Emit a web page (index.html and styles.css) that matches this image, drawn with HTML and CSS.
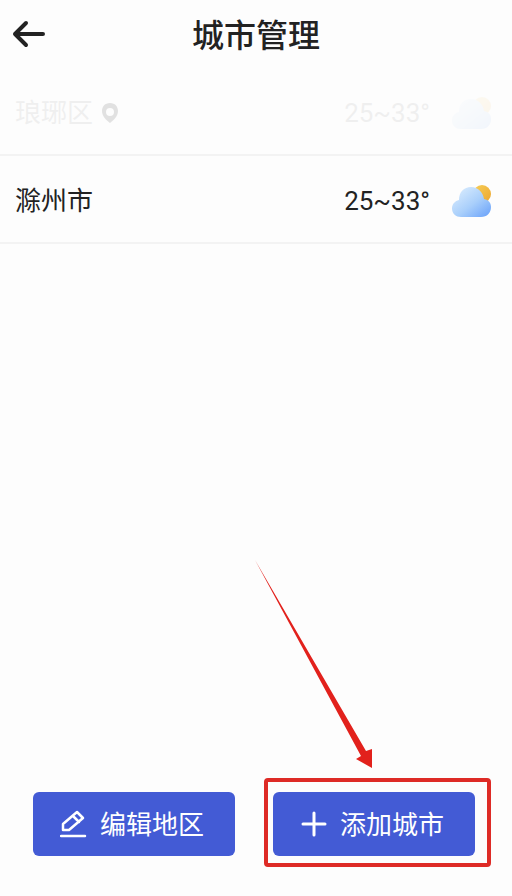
FILE: index.html
```html
<!DOCTYPE html>
<html lang="zh-CN">
<head>
    <meta charset="UTF-8">
    <meta name="viewport" content="width=device-width, initial-scale=1.0">
    <title>城市管理</title>
    <link rel="stylesheet" href="styles.css">
</head>
<body>
    <header class="top-bar">
        <button type="button" class="back-btn" aria-label="返回">
            <svg width="34" height="28" viewBox="0 0 34 28" fill="none" stroke="currentColor" stroke-width="4" stroke-linecap="round" stroke-linejoin="round">
                <path d="M14 3L3 14L14 25M3 14H31"/>
            </svg>
        </button>
        <h1>城市管理</h1>
    </header>

    <main>
        <ul class="city-list">
            <li class="city-row faded">
                <span class="city-name">琅琊区</span>
                <svg class="pin" width="18" height="20" viewBox="0 0 18 20">
                    <path fill="currentColor" fill-rule="evenodd" d="M9 0C4 0 1 3.600 1 8C1 13 5 17 9 20C13 17 17 13 17 8C17 3.600 14 0 9 0ZM9 5A4 4 0 1 1 9 13A4 4 0 1 1 9 5Z"/>
                </svg>
                <span class="temp">25~33°</span>
                <svg class="weather" width="40" height="34" viewBox="0 0 40 34">
                    <use href="#cloudy"/>
                </svg>
            </li>
            <li class="city-row">
                <span class="city-name">滁州市</span>
                <span class="temp">25~33°</span>
                <svg class="weather" width="40" height="34" viewBox="0 0 40 34">
                    <defs>
                        <linearGradient id="cloud" x1="0.1" y1="0.2" x2="0.9" y2="1">
                            <stop offset="0" stop-color="#d3e8fd"/>
                            <stop offset="0.5" stop-color="#a9cffb"/>
                            <stop offset="1" stop-color="#6ea5fa"/>
                        </linearGradient>
                        <linearGradient id="sun" x1="0" y1="0" x2="1" y2="1">
                            <stop offset="0" stop-color="#f6cf58"/>
                            <stop offset="1" stop-color="#eda52f"/>
                        </linearGradient>
                    </defs>
                    <g id="cloudy">
                        <circle cx="30" cy="10" r="9" fill="url(#sun)"/>
                        <path fill="url(#cloud)" d="M9 33C4 33 0 29.500 0 24.500C0 20 3 17 7 16C7 8 12 3 19 3C26 3 31 8 32 15C37 16 39 19 39 23C39 29 35 33 29 33Z"/>
                    </g>
                </svg>
            </li>
        </ul>
    </main>

    <footer class="actions">
        <button type="button" class="action-btn">
            <svg width="28" height="28" viewBox="0 0 28 28" fill="none" stroke="currentColor" stroke-width="2.500" stroke-linejoin="round" stroke-linecap="round">
                <path d="M3 20V14L17 2L23 8L9 20ZM13 6L19 12"/>
                <path d="M1 26H25"/>
            </svg>
            <span>编辑地区</span>
        </button>
        <div class="highlight">
            <button type="button" class="action-btn">
                <svg width="28" height="28" viewBox="0 0 28 28" fill="none" stroke="currentColor" stroke-width="3" stroke-linecap="round">
                    <path d="M14 3V25M3 14H25"/>
                </svg>
                <span>添加城市</span>
            </button>
            <svg class="arrow" width="118" height="210" viewBox="0 0 118 210">
                <path fill="#e2211c" d="M0 0L111 191L117 189V208L101 199L106 196Z"/>
            </svg>
        </div>
    </footer>
</body>
</html>
```

FILE: styles.css
```css
:root {
    --primary-color: #435bd5;
    --text-color: #222222;
    --border-color: #f3f3f3;
    --bg-color: #fdfdfd;
    --mark-color: #de2b26;
}

* {
    box-sizing: border-box;
}

body {
    margin: 0;
    min-height: 100vh;
    display: flex;
    flex-direction: column;
    font-family: Roboto, "Noto Sans CJK SC", sans-serif;
    font-size: 26px;
    line-height: 40px;
    color: var(--text-color);
    background-color: var(--bg-color);
}

.top-bar {
    display: grid;
    grid-template-columns: 36px 1fr 36px;
    align-items: center;
    height: 68px;
    padding: 0 12px;
}

.back-btn {
    display: flex;
    padding: 0;
    border: none;
    background: none;
    color: var(--text-color);
    cursor: pointer;
}

h1 {
    margin: 0;
    padding-top: 4px;
    text-align: center;
    font-size: 32px;
    font-weight: 500;
}

main {
    flex: 1;
}

.city-list {
    margin: 0;
    padding: 0;
    list-style: none;
}

.city-row {
    display: flex;
    align-items: center;
    height: 88px;
    padding: 4px 20px 0 15px;
    border-bottom: 2px solid var(--border-color);
}

.temp {
    margin-left: auto;
}

.pin {
    margin-left: 8px;
}

.weather {
    margin-left: 22px;
}

.faded .city-name,
.faded .temp {
    opacity: 0.06;
}

.faded .pin {
    opacity: 0.12;
}

.faded .weather {
    opacity: 0.07;
}

.actions {
    display: grid;
    grid-template-columns: 1fr 1fr;
    gap: 38px;
    padding: 0 37px 40px 33px;
}

.action-btn {
    display: flex;
    justify-content: center;
    align-items: center;
    gap: 12px;
    width: 100%;
    height: 64px;
    padding: 0 4px 0 0;
    border: none;
    border-radius: 6px;
    background-color: var(--primary-color);
    color: white;
    font: inherit;
    cursor: pointer;
}

.action-btn span {
    padding-top: 2px;
}

.highlight {
    position: relative;
}

/* red frame drawn around the add button */
.highlight::after {
    content: "";
    position: absolute;
    top: -14px;
    right: -16px;
    bottom: -11px;
    left: -9px;
    border: 4px solid var(--mark-color);
    border-radius: 4px;
    pointer-events: none;
}

.arrow {
    position: absolute;
    bottom: 86px;
    left: -18px;
    pointer-events: none;
}
```
